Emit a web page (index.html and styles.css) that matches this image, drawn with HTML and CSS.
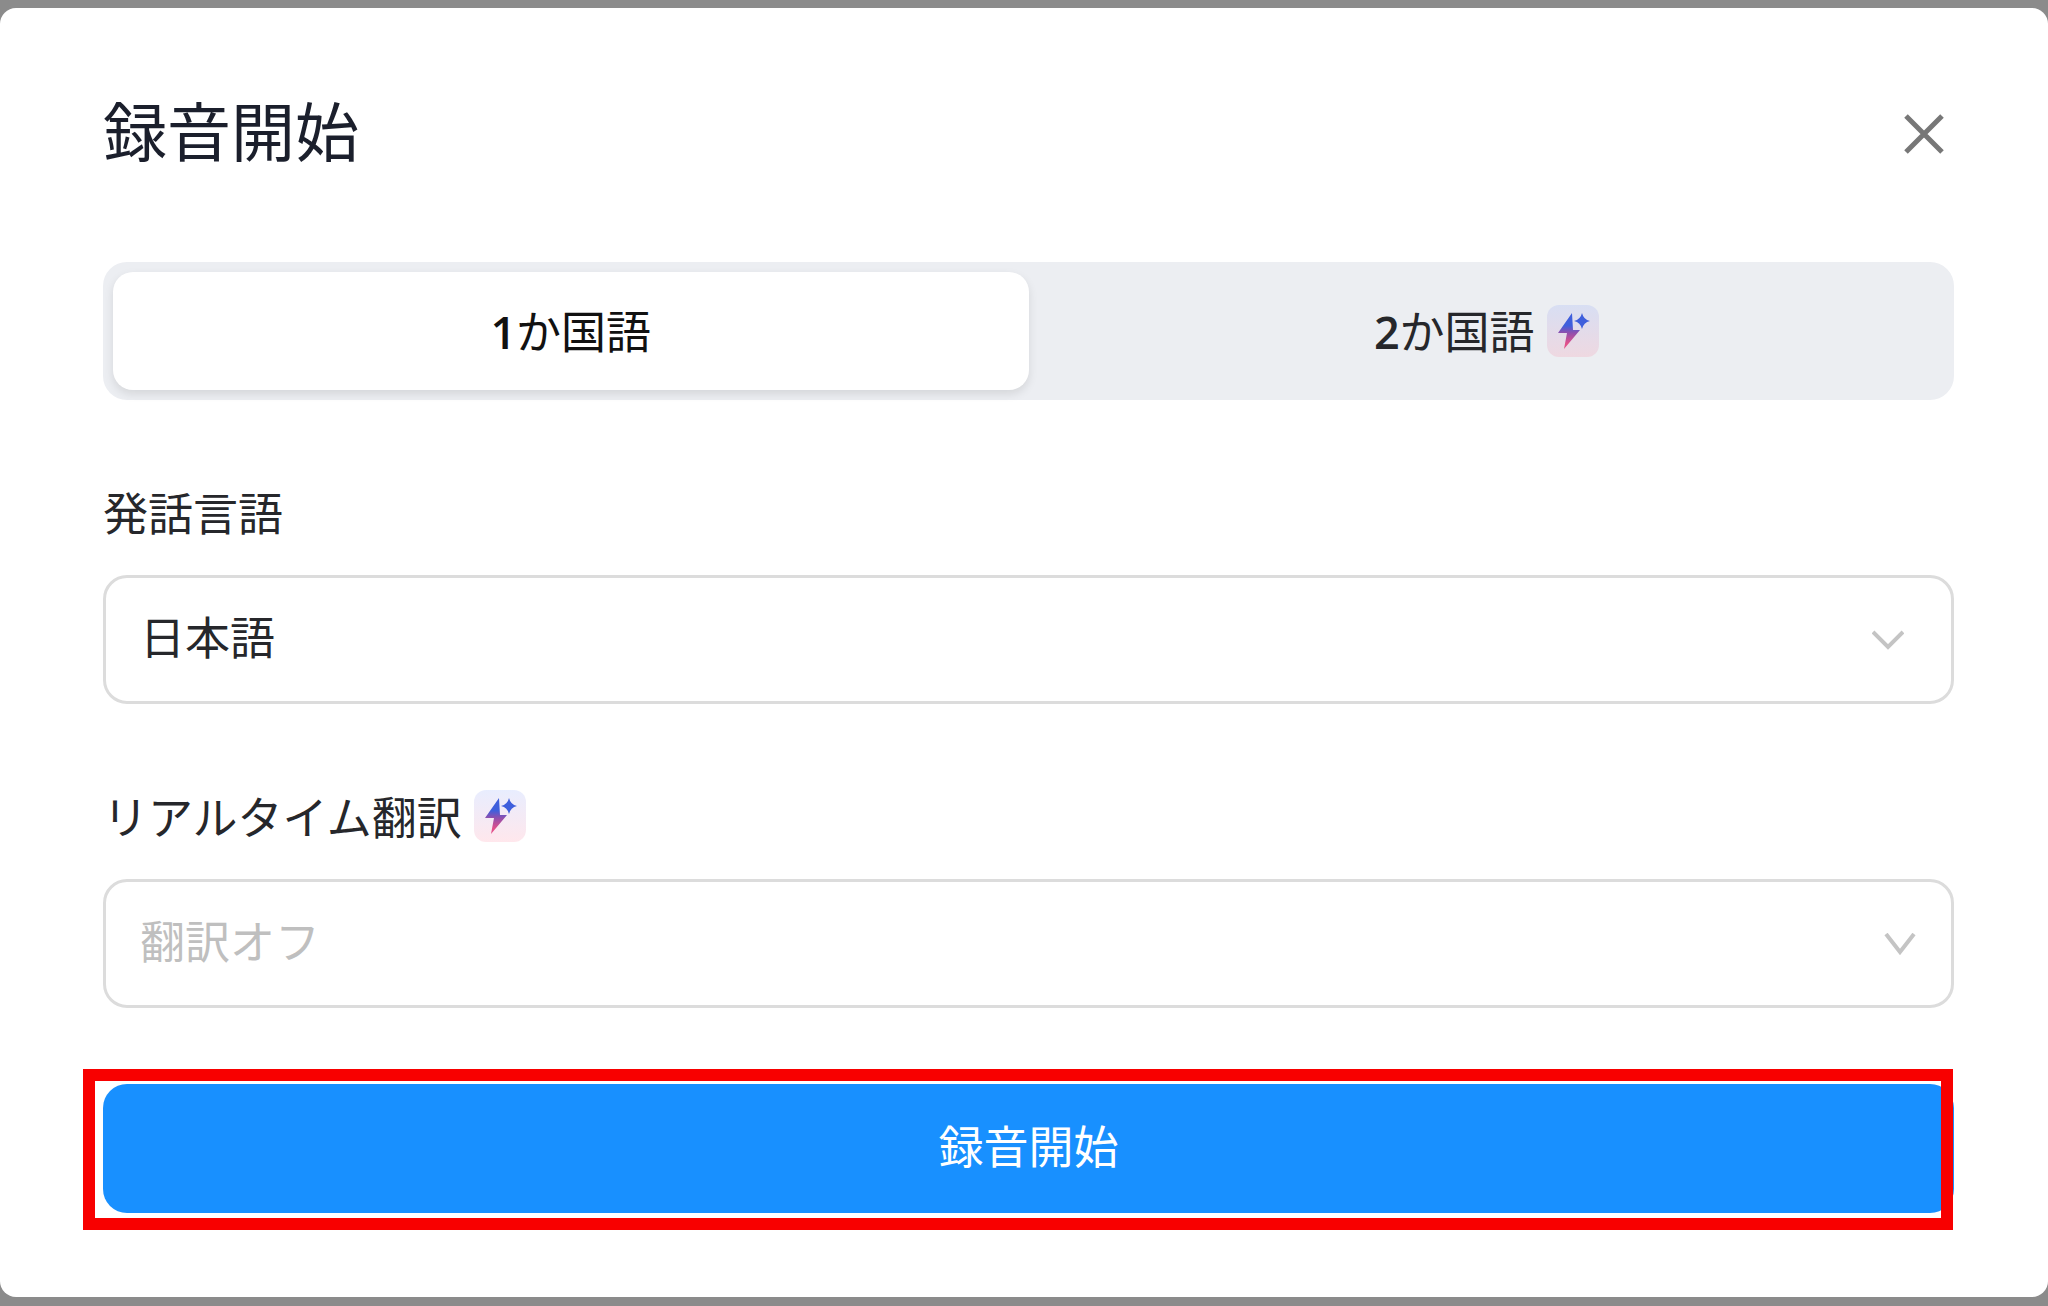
FILE: index.html
```html
<!DOCTYPE html>
<html lang="ja">
<head>
  <meta charset="UTF-8">
  <meta name="viewport" content="width=device-width, initial-scale=1.0">
  <title>録音開始</title>
  <link rel="stylesheet" href="styles.css">
</head>
<body>
  <!-- バッジ共通のアイコン定義 -->
  <svg class="defs" width="0" height="0" aria-hidden="true">
    <defs>
      <linearGradient id="bolt-color" gradientUnits="userSpaceOnUse" x1="0" y1="8" x2="0" y2="44">
        <stop offset="0.35" stop-color="#3f5fdc"/>
        <stop offset="0.55" stop-color="#8f4fae"/>
        <stop offset="0.85" stop-color="#e2508a"/>
      </linearGradient>
      <symbol id="bolt" viewBox="0 0 52 52">
        <path fill="url(#bolt-color)" d="M25 8 L11 28 H20 L17 44 L33 25 H26 Z"/>
        <path fill="#3f5fdc" d="M35 8 Q36.500 14.500 43 16 Q36.500 17.500 35 24 Q33.500 17.500 27 16 Q33.500 14.500 35 8 Z"/>
      </symbol>
    </defs>
  </svg>

  <main class="modal" role="dialog" aria-labelledby="modal-title">
    <header class="modal-header">
      <h1 id="modal-title">録音開始</h1>
      <button class="close" type="button" aria-label="閉じる">
        <svg viewBox="0 0 40 40" aria-hidden="true"><path d="M2 2 L38 38 M38 2 L2 38"/></svg>
      </button>
    </header>

    <div class="tabs" role="tablist">
      <button class="tab active" type="button" role="tab" aria-selected="true">
        <span><span class="num">1</span>か国語</span>
      </button>
      <button class="tab" type="button" role="tab" aria-selected="false">
        <span><span class="num">2</span>か国語</span>
        <svg class="badge" aria-hidden="true"><use href="#bolt"/></svg>
      </button>
    </div>

    <div class="field">
      <label for="speech-lang">発話言語</label>
      <div class="select-box">
        <select id="speech-lang">
          <option>日本語</option>
        </select>
        <svg class="arrow" viewBox="0 0 32 22" aria-hidden="true"><path d="M1 3 L16 18 L31 3"/></svg>
      </div>
    </div>

    <div class="field">
      <label for="translation">リアルタイム翻訳
        <svg class="badge" aria-hidden="true"><use href="#bolt"/></svg>
      </label>
      <div class="select-box off">
        <select id="translation">
          <option>翻訳オフ</option>
        </select>
        <svg class="arrow" viewBox="0 0 32 22" aria-hidden="true"><path d="M2 1 L16 19 L30 1"/></svg>
      </div>
    </div>

    <div class="submit">
      <button class="start" type="button">録音開始</button>
    </div>
  </main>
</body>
</html>
```
FILE: styles.css
```css
* {
  box-sizing: border-box;
}

body {
  margin: 0;
  padding: 8px 0;
  background: #8b8b8b;
  font-family: "Noto Sans CJK JP", sans-serif;
  font-size: 45px;
  line-height: 60px;
  color: #26272b;
}

button,
select {
  font: inherit;
  color: inherit;
  cursor: pointer;
}

.defs {
  position: absolute;
}

.modal {
  padding: 78px 94px 84px 103px;
  background: #fff;
  border-radius: 16px;
}

.modal-header {
  display: flex;
  justify-content: space-between;
  align-items: center;
  margin-bottom: 92px;
}

.modal-header h1 {
  margin: 0;
  font-size: 64px;
  font-weight: 400;
  line-height: 84px;
  color: #1b1f2c;
}

.close {
  display: flex;
  padding: 16px 10px 4px;
  border: 0;
  background: none;
}

.close svg {
  width: 40px;
  height: 40px;
  fill: none;
  stroke: #777;
  stroke-width: 5;
}

/* タブ */
.tabs {
  display: flex;
  padding: 10px;
  background: #eceef2;
  border-radius: 24px;
}

.tab {
  flex: 1;
  display: flex;
  justify-content: center;
  align-items: center;
  gap: 12px;
  height: 118px;
  padding: 0;
  border: 0;
  border-radius: 20px;
  background: none;
}

.tab.active {
  background: #fff;
  color: #111;
  box-shadow: 0 4px 10px rgba(0, 0, 0, 0.1);
}

.num {
  font-family: "Open Sans", sans-serif;
  font-weight: 600;
}

.badge {
  width: 52px;
  height: 52px;
  border-radius: 12px;
  background: linear-gradient(rgba(70, 110, 250, 0.12), rgba(255, 70, 110, 0.13));
}

/* 入力欄 */
.field {
  margin-top: 82px;
}

.field label {
  display: flex;
  align-items: center;
  gap: 12px;
  margin-bottom: 33px;
}

.select-box {
  position: relative;
}

.select-box select {
  display: block;
  width: 100%;
  height: 129px;
  padding: 0 34px 8px;
  border: 3px solid #dcdcdc;
  border-radius: 24px;
  background: #fff;
  appearance: none;
}

.select-box.off select {
  color: #bfbfbf;
}

.arrow {
  position: absolute;
  top: 0;
  bottom: 0;
  right: 50px;
  width: 32px;
  margin: auto 0;
  height: 22px;
  fill: none;
  stroke: #c4c4c4;
  stroke-width: 4;
  pointer-events: none;
}

.off .arrow {
  right: 38px;
}

/* 開始ボタン */
.submit {
  position: relative;
  margin-top: 76px;
}

.start {
  display: block;
  width: 100%;
  height: 129px;
  padding: 0 0 8px;
  border: 0;
  border-radius: 24px;
  background: #1890ff;
  color: #fff;
}

/* ボタンを囲む赤枠 */
.submit::after {
  content: "";
  position: absolute;
  top: -15px;
  right: 1px;
  bottom: -17px;
  left: -20px;
  border: 12px solid #f80000;
  pointer-events: none;
}
```
